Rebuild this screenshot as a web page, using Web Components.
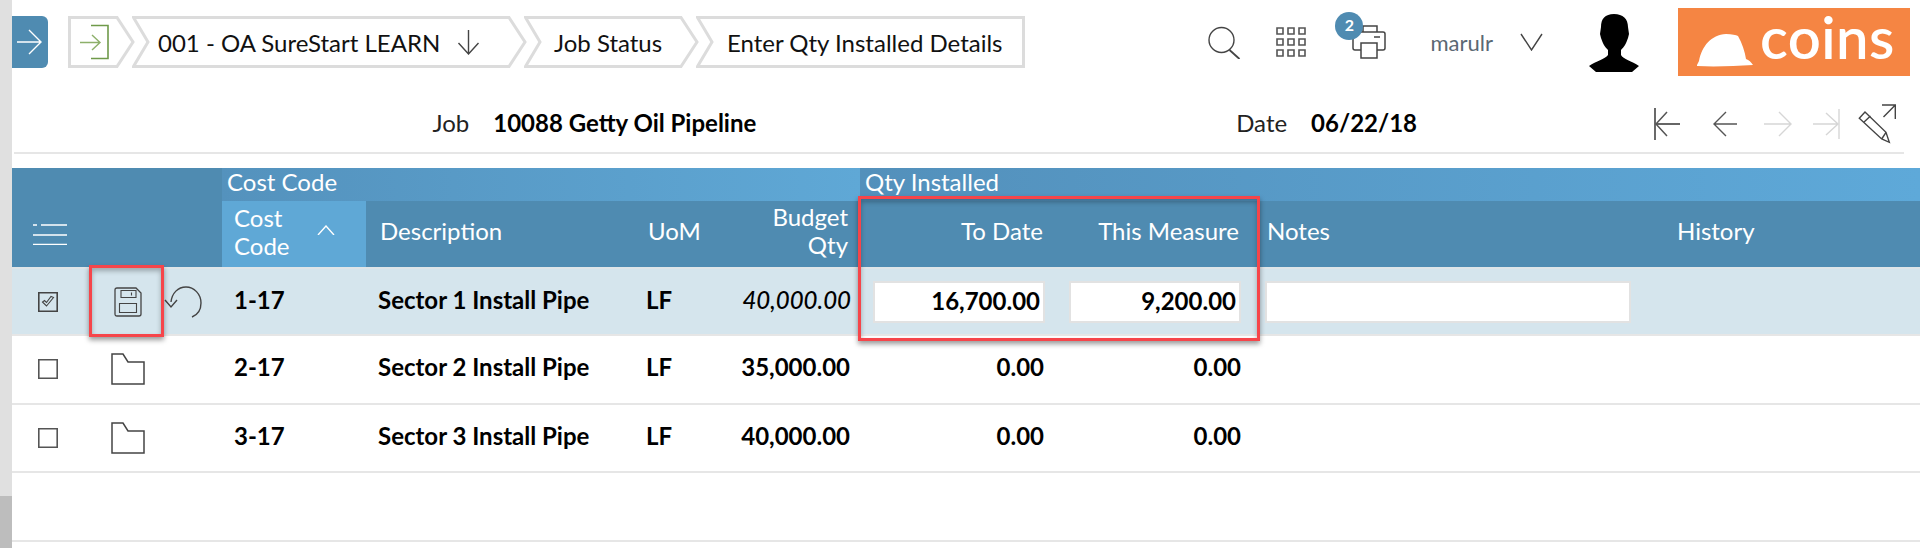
<!DOCTYPE html>
<html lang="en">
<head>
<meta charset="utf-8">
<title>Enter Qty Installed Details</title>
<style>
  html, body { margin: 0; height: 100%; overflow: hidden; background: #fff; }
  body { font-family: Lato, "Open Sans", sans-serif; color: #000; }
</style>
</head>
<body>

<app-shell>
  <top-bar>
    <side-toggle slot="toggle"></side-toggle>
    <bread-crumb slot="crumbs" data-w="67" data-first><line-icon name="enter"></line-icon></bread-crumb>
    <bread-crumb slot="crumbs" data-w="395" data-pad="26">001 - OA SureStart LEARN<line-icon name="down" style="margin-left:17px"></line-icon></bread-crumb>
    <bread-crumb slot="crumbs" data-w="175" data-pad="30">Job Status</bread-crumb>
    <bread-crumb slot="crumbs" data-w="329" data-pad="31" data-last>Enter Qty Installed Details</bread-crumb>
    <user-tools slot="tools"></user-tools>
  </top-bar>

  <form-head>
    <span slot="job">10088 Getty Oil Pipeline</span>
    <span slot="date">06/22/18</span>
  </form-head>

  <qty-grid>
    <grid-row data-kind="head">
      <line-icon name="menu" style="margin-left:21px"></line-icon>
      <span></span>
      <sort-head>Cost<br>Code</sort-head>
      <span class="txt" style="padding-left:14px">Description</span>
      <span class="txt" style="padding-left:8px">UoM</span>
      <span class="num" style="padding-right:10px">Budget<br>Qty</span>
      <span class="num" style="padding-right:15px">To Date</span>
      <span class="num" style="padding-right:15px">This Measure</span>
      <span class="txt" style="padding-left:13px">Notes</span>
      <span class="txt" style="padding-left:7px">History</span>
    </grid-row>

    <grid-row data-kind="active">
      <line-icon name="checked" style="margin-left:26px"></line-icon>
      <span class="icons"><line-icon name="save" style="margin-left:25px"></line-icon><line-icon name="undo" style="margin-left:22px"></line-icon></span>
      <b style="padding-left:12px">1-17</b>
      <b style="padding-left:12px">Sector 1 Install Pipe</b>
      <b style="padding-left:6px">LF</b>
      <i class="num" style="padding-right:7px">40,000.00</i>
      <cell-input data-left="15" data-w="172">16,700.00</cell-input>
      <cell-input data-left="11" data-w="172">9,200.00</cell-input>
      <cell-input data-left="11" data-w="366"></cell-input>
      <span></span>
    </grid-row>

    <grid-row>
      <line-icon name="box" style="margin-left:26px"></line-icon>
      <span class="icons"><line-icon name="folder" style="margin-left:22px"></line-icon></span>
      <b style="padding-left:12px">2-17</b>
      <b style="padding-left:12px">Sector 2 Install Pipe</b>
      <b style="padding-left:6px">LF</b>
      <b class="num" style="padding-right:8px">35,000.00</b>
      <b class="num" style="padding-right:14px">0.00</b>
      <b class="num" style="padding-right:13px">0.00</b>
      <span></span><span></span>
    </grid-row>

    <grid-row>
      <line-icon name="box" style="margin-left:26px"></line-icon>
      <span class="icons"><line-icon name="folder" style="margin-left:22px"></line-icon></span>
      <b style="padding-left:12px">3-17</b>
      <b style="padding-left:12px">Sector 3 Install Pipe</b>
      <b style="padding-left:6px">LF</b>
      <b class="num" style="padding-right:8px">40,000.00</b>
      <b class="num" style="padding-right:14px">0.00</b>
      <b class="num" style="padding-right:13px">0.00</b>
      <span></span><span></span>
    </grid-row>

    <grid-row data-kind="empty"></grid-row>

    <mark-box style="left:77px;top:97px;width:75px;height:72px"></mark-box>
    <mark-box style="left:846px;top:28px;width:402px;height:145px"></mark-box>
  </qty-grid>
</app-shell>

<script>
// every icon is [width, height, markup], drawn with currentColor
const ICONS = {
  enter: [32, 36, '<path d="M1 18.500h19M13 11l8 7.500-8 7.500" stroke="#8db06a"/><path d="M12 1.500h17v33H12" stroke="#6f9a4a" stroke-width="1.600"/>'],
  down: [23, 26, '<path d="M11.500 1v24M1.500 14l10 11 10-11"/>'],
  search: [33, 33, '<circle cx="13.500" cy="14" r="12.500"/><path d="M21.500 24l10 9" stroke-width="1.800"/>'],
  apps: [30, 30, '<path d="M1 1h6v6H1zM12 1h6v6h-6zM23 1h6v6h-6zM1 12h6v6H1zM12 12h6v6h-6zM23 12h6v6h-6zM1 23h6v6H1zM12 23h6v6h-6zM23 23h6v6h-6z" stroke="#555" stroke-width="1.600"/>'],
  printer: [34, 34, '<path d="M9 25H3q-2 0-2-2V9q0-2 2-2h28q2 0 2 2v14q0 2-2 2h-6M11 7V1h14v6M22 12h6" stroke-width="1.500"/><path d="M9 18h16v15H9z" stroke-width="1.500"/>'],
  caret: [23, 18, '<path d="M1 1l10.500 16L22 1"/>'],
  first: [27, 34, '<path d="M1 1v32" stroke-width="1.600"/><path d="M26 17H2" stroke="#666" stroke-width="2"/><path d="M13 5L2 17l11 12" stroke="#555" stroke-width="1.500"/>'],
  prev: [24, 26, '<path d="M24 13H1M13 1L1 13l12 12" stroke="#555"/>'],
  nextOff: [28, 26, '<path d="M0 13h27M15 1l12 12-12 12" stroke="#d6d6d6"/>'],
  lastOff: [27, 32, '<path d="M0 16h25M13 5l12 11-12 11" stroke="#d6d6d6"/><path d="M26 1v30" stroke="#d6d6d6"/>'],
  pencil: [38, 40, '<path d="M1.300 14.300L7 8l21 20.300 3.300 10-7.600-3.300zM5.500 18.500L12.500 12M28 28.300L23.700 35M24 1h13.300v14M37.300 1L25.500 13" stroke-width="1.400"/>'],
  menu: [34, 21, '<path d="M0 1h4M8 1h26M0 11h34M0 20.500h34" stroke="#fff"/>'],
  checked: [20, 20, '<path d="M.8.8h18.400v18.400H.8z" stroke-width="1.600"/><path d="M4.500 10l4 4 7-8.500-2.500-1-4.500 6-2-2z" stroke-width="1.100"/>'],
  box: [20, 20, '<path d="M.8.8h18.400v18.400H.8z" stroke-width="1.600" stroke="#555"/>'],
  save: [28, 30, '<path d="M3 1h19l5 5v21q0 2-2 2H3q-2 0-2-2V3q0-2 2-2z" stroke-width="1.300"/><path d="M7 3.500h15v7H7zM5.500 16.500h17v9h-17zM17.500 5.500v3" stroke-width="1.100"/>'],
  undo: [38, 32, '<path d="M28 31c5-2 9-7 9-14C37 8 30 1 22 1 14 1 8 7 7 16" stroke-width="1.400"/><path d="M1 14l6 7 6-7" stroke-width="1.400"/>'],
  folder: [34, 32, '<path d="M1 31V1h11l5 8h16v22z" stroke-width="1.500" stroke="#444"/>']
};

class LineIcon extends HTMLElement {
  connectedCallback() {
    const [w, h, body] = ICONS[this.getAttribute('name')];
    this.attachShadow({ mode: 'open' }).innerHTML = `
      <style>:host { display: inline-flex; flex: none; color: #444; }</style>
      <svg width="${w}" height="${h}" viewBox="0 0 ${w} ${h}" fill="none" stroke="currentColor" stroke-width="1.400">${body}</svg>`;
  }
}

class AppShell extends HTMLElement {
  constructor() {
    super();
    this.attachShadow({ mode: 'open' }).innerHTML = `
      <style>
        :host { display: flex; height: 548px; }
        .gutter { width: 12px; flex: none; background: linear-gradient(#e0e0e0 496px, #bdbdbd 496px); }
        main { flex: 1; min-width: 0; }
      </style>
      <div class="gutter"></div>
      <main><slot></slot></main>`;
  }
}

class TopBar extends HTMLElement {
  constructor() {
    super();
    this.attachShadow({ mode: 'open' }).innerHTML = `
      <style>
        :host { display: flex; align-items: center; height: 84px; }
        .crumbs { display: flex; margin-left: 20px; }
        .tools { margin-left: auto; }
      </style>
      <slot name="toggle"></slot>
      <div class="crumbs"><slot name="crumbs"></slot></div>
      <div class="tools"><slot name="tools"></slot></div>`;
  }
}

class SideToggle extends HTMLElement {
  constructor() {
    super();
    this.attachShadow({ mode: 'open' }).innerHTML = `
      <style>
        :host { display: flex; align-items: center; justify-content: center; width: 36px; height: 52px;
                background: #4f8bb1; border-radius: 0 6px 6px 0; color: #fff; }
        svg { margin-right: 2px; }
      </style>
      <svg width="25" height="26" viewBox="0 0 25 26" fill="none" stroke="#fff" stroke-width="1.400"><path d="M0 13h24M12 1l12 12-12 12"/></svg>`;
  }
}

class BreadCrumb extends HTMLElement {
  connectedCallback() {
    const w = +this.dataset.w, pad = this.dataset.pad || 0;
    const first = 'first' in this.dataset;
    const left = first ? '1.500,1.500 1.500,50.500' : '1.500,1.500 16,26 1.500,50.500';
    const right = 'last' in this.dataset
      ? `${w - 1.5},50.500 ${w - 1.5},1.500`
      : `${w - 18},50.500 ${w - 2},26 ${w - 18},1.500`;
    // the chevrons overlap by 3px
    this.attachShadow({ mode: 'open' }).innerHTML = `
      <style>
        :host { display: flex; align-items: center; position: relative; height: 52px; width: ${w}px;
                margin-left: ${first ? 0 : -3}px; box-sizing: border-box; padding-left: ${pad}px;
                font-size: 24px; color: #111; }
        :host([data-first]) { padding-left: 11px; }
        svg { position: absolute; left: 0; top: 0; }
        span { position: relative; display: flex; align-items: center; white-space: nowrap; }
      </style>
      <svg width="${w}" height="52" fill="none" stroke="#dcdcdc" stroke-width="3"><polygon points="${left} ${right}"/></svg>
      <span><slot></slot></span>`;
  }
}

class UserTools extends HTMLElement {
  constructor() {
    super();
    this.attachShadow({ mode: 'open' }).innerHTML = `
      <style>
        :host { display: flex; align-items: center; height: 84px; padding-right: 10px; color: #444; }
        .print { position: relative; display: flex; margin-left: 46px; }
        .badge { position: absolute; left: -17px; top: -13px; width: 28px; height: 28px; border-radius: 50%;
                 background: #4f8bb1; color: #fff; font: 700 16px/26px Lato, sans-serif; text-align: center; }
        .name { margin-left: 44px; font-size: 22px; color: #5b6873; }
        .logo { display: flex; align-items: center; width: 232px; height: 68px; margin-left: 38px;
                background: #f58543; color: #fff; }
        .logo span { margin-left: 6px; font: 600 58px/60px Lato, sans-serif; letter-spacing: .4px; margin-top: -11px; }
        svg { flex: none; }
      </style>
      <line-icon name="search"></line-icon>
      <line-icon name="apps" style="margin-left:35px"></line-icon>
      <div class="print"><line-icon name="printer"></line-icon><div class="badge">2</div></div>
      <span class="name">marulr</span>
      <line-icon name="caret" style="margin-left:27px"></line-icon>
      <svg style="margin-left:45px;margin-top:2px" width="52" height="58" viewBox="0 0 52 58">
        <path d="M26 0C17 0 13 5 13 13L12 20 13 24C15 30 17 33 20 36V41C17 45 8 47 1 52L8 58H44L51 52C44 47 35 45 33 41V36C36 33 38 30 40 24L41 20 40 13C40 5 35 0 26 0Z"/>
      </svg>
      <div class="logo">
        <svg style="margin:16px 0 0 18px" width="58" height="33" viewBox="0 0 58 33" fill="#fff">
          <path d="M1 31L3 27C6 12 15 1 30 0C36 0 40 1 42 2C46 9 49 18 50 25C53 26 55 28 57 31C38 32 20 33 1 32Z"/>
        </svg>
        <span>coins</span>
      </div>`;
  }
}

class FormHead extends HTMLElement {
  constructor() {
    super();
    this.attachShadow({ mode: 'open' }).innerHTML = `
      <style>
        :host { display: flex; align-items: center; box-sizing: border-box; height: 70px; margin: 0 16px 0 2px;
                padding: 8px 0 0 418.500px; border-bottom: 2px solid #e6e6e6; font-size: 24px; color: #222; }
        .val { font-weight: 700; color: #000; margin-left: 24px; }
        nav { display: flex; align-items: center; margin-left: 237px; padding-top: 4px; }
      </style>
      <span>Job</span><span class="val"><slot name="job"></slot></span>
      <span style="margin-left:auto">Date</span><span class="val"><slot name="date"></slot></span>
      <nav>
        <line-icon name="first"></line-icon>
        <line-icon name="prev" style="margin-left:32px"></line-icon>
        <line-icon name="nextOff" style="margin-left:27px"></line-icon>
        <line-icon name="lastOff" style="margin-left:21px"></line-icon>
        <line-icon name="pencil" style="margin-left:18px;margin-right:8px"></line-icon>
      </nav>`;
  }
}

class QtyGrid extends HTMLElement {
  constructor() {
    super();
    this.attachShadow({ mode: 'open' }).innerHTML = `
      <style>
        :host { display: block; position: relative; margin-top: 14px; font-size: 24px; }
        .groups { display: grid; grid-template-columns: 210px 638px 1fr; height: 33px; color: #fff; line-height: 28px; }
        .groups div { padding-left: 5px; background: linear-gradient(90deg, #5390bb, #5ea9d9); }
        .groups div:first-child { background: #4f8bb1; }
        .groups div:nth-child(2) { background: linear-gradient(90deg, #5492bd, #5fa8d6); }
      </style>
      <div class="groups"><div></div><div>Cost Code</div><div>Qty Installed</div></div>
      <slot></slot>`;
  }
}

class GridRow extends HTMLElement {
  constructor() {
    super();
    this.attachShadow({ mode: 'open' }).innerHTML = `
      <style>
        :host { display: grid; grid-template-columns: 77px 133px 144px 274px 80px 138px 200px 196px 416px 1fr;
                align-items: center; box-sizing: border-box; height: 68.500px; border-bottom: 2px solid #e6e6e6;
                font-size: 24px; color: #000; }
        :host([data-kind="head"]) { height: 66px; background: #4f8bb1; color: #fff; border: 0; line-height: 28px; }
        :host([data-kind="active"]) { height: 69px; background: #d5e5ed; border-top: 2px solid #dfe5e8; }
        ::slotted(.num) { text-align: right; }
        ::slotted(.icons) { display: flex; align-items: center; }
        ::slotted(.txt), ::slotted(span.num) { padding-bottom: 6px; }
        ::slotted(b), ::slotted(i) { padding-bottom: 5px; }
        ::slotted(i) { font-weight: 500; }
      </style>
      <slot></slot>`;
  }
}

class SortHead extends HTMLElement {
  constructor() {
    super();
    this.attachShadow({ mode: 'open' }).innerHTML = `
      <style>
        :host { display: flex; align-items: center; height: 66px; box-sizing: border-box; padding-left: 12px;
                background: #5fa8d6; line-height: 28px; }
        span { padding-bottom: 4px; }
        svg { margin: 0 0 8px 27px; }
      </style>
      <span><slot></slot></span>
      <svg width="18" height="10" viewBox="0 0 18 10" fill="none" stroke="#fff" stroke-width="1.400"><path d="M1 10l8-9 8 9"/></svg>`;
  }
}

class CellInput extends HTMLElement {
  connectedCallback() {
    this.attachShadow({ mode: 'open' }).innerHTML = `
      <style>
        :host { display: block; padding-left: ${this.dataset.left}px; }
        div { box-sizing: border-box; width: ${this.dataset.w}px; height: 42px; padding-right: 3px; background: #fff;
              border: 2px solid #e2e2e2; font-weight: 700; font-size: 24px; line-height: 36px; text-align: right; }
      </style>
      <div><slot></slot></div>`;
  }
}

// the red callouts are annotations lying on top of the grid
class MarkBox extends HTMLElement {
  constructor() {
    super();
    this.attachShadow({ mode: 'open' }).innerHTML = `
      <style>
        :host { display: block; position: absolute; box-sizing: border-box; border: 3.500px solid #f6454a;
                box-shadow: 0 3px 5px rgba(0,0,0,.4), inset 0 3px 5px rgba(0,0,0,.28); pointer-events: none; }
      </style>`;
  }
}

customElements.define('line-icon', LineIcon);
customElements.define('app-shell', AppShell);
customElements.define('top-bar', TopBar);
customElements.define('side-toggle', SideToggle);
customElements.define('bread-crumb', BreadCrumb);
customElements.define('user-tools', UserTools);
customElements.define('form-head', FormHead);
customElements.define('qty-grid', QtyGrid);
customElements.define('grid-row', GridRow);
customElements.define('sort-head', SortHead);
customElements.define('cell-input', CellInput);
customElements.define('mark-box', MarkBox);
</script>
</body>
</html>
